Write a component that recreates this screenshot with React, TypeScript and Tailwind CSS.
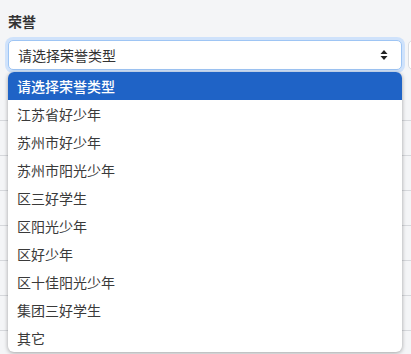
const options = [
  "请选择荣誉类型",
  "江苏省好少年",
  "苏州市好少年",
  "苏州市阳光少年",
  "区三好学生",
  "区阳光少年",
  "区好少年",
  "区十佳阳光少年",
  "集团三好学生",
  "其它",
]

function Chevron() {
  return (
    <svg width="10" height="12" viewBox="0 0 10 12" className="text-[#222]">
      <path d="M5 1 L8.5 5 H1.5 Z" fill="currentColor" />
      <path d="M5 11 L8.5 7 H1.5 Z" fill="currentColor" />
    </svg>
  )
}

export default function App() {
  return (
    <div
      className="relative h-[354px] w-[411px] overflow-hidden bg-[#f4f5f7] text-[#333]"
      style={{ fontFamily: '"Noto Sans CJK SC", "Noto Sans", sans-serif' }}
    >
      {/* Form field */}
      <div className="pl-[8px] pt-[10px]">
        <h3 className="text-[14px] font-bold leading-[22px] text-[#333]">荣誉</h3>
        <div className="mt-[8px] flex w-[430px] gap-[6px]">
          <div className="flex h-[30px] w-[394px] items-center justify-between rounded-[5px] border border-[#9ec5f4] bg-white pl-[9px] pr-[12px] shadow-[0_0_0_3px_#cfe2fb]">
            <span className="text-[14px] text-[#333]">请选择荣誉类型</span>
            <Chevron />
          </div>
          <div className="h-[30px] flex-1 rounded-[5px] border border-[#d9dce1] bg-white" />
        </div>
      </div>

      {/* Table behind the menu */}
      <div className="mt-[16px] flex flex-col">
        {Array.from({ length: 8 }).map((_, i) => (
          <div key={i} className="h-[35px] border-b border-[#d6d8dc] bg-[#f4f5f7]" />
        ))}
        <div className="pl-[30px] pt-[2px] text-[13px] font-bold text-[#222]">荣誉获奖情况统计</div>
      </div>

      {/* Dropdown menu */}
      <div className="absolute left-[8px] top-[72px] w-[394px] rounded-[6px] bg-white shadow-[0_1px_4px_rgba(0,0,0,0.35)]">
        {options.map((o, i) => (
          <div
            key={o}
            className={
              i === 0
                ? "flex h-[28px] items-center rounded-t-[6px] bg-[#1f63c6] pl-[9px] text-[14px] font-medium text-white"
                : "flex h-[28px] items-center pl-[9px] text-[14px] text-[#3a3a3a]"
            }
          >
            {o}
          </div>
        ))}
      </div>
    </div>
  )
}
